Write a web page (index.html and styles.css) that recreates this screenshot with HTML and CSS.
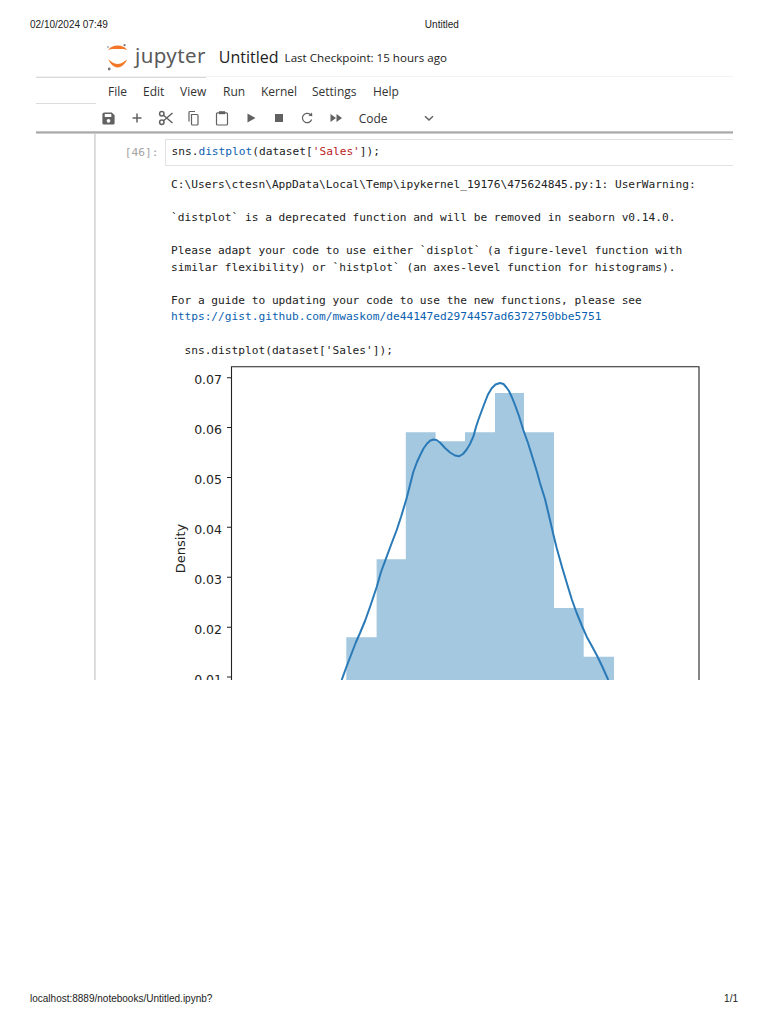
FILE: index.html
```html
<!DOCTYPE html>
<html lang="en">
<head>
<meta charset="utf-8">
<title>Untitled</title>
<link rel="stylesheet" href="styles.css">
</head>
<body>
<div class="sheet">
  <div class="print-head"><span>02/10/2024 07:49</span><span class="print-title">Untitled</span></div>
  <header class="nb-head">
    <svg class="logo" viewBox="107 44 21 27" width="21" height="27" aria-hidden="true">
      <path class="logo-arc" d="M108 50.400C110 47 113.600 45.600 117.700 45.600C121.800 45.600 125.400 47 127.200 50.400C125 48.400 121.600 49 117.700 49C113.800 49 110.200 48.400 108 50.400Z"/>
      <path class="logo-arc" d="M108.400 59.300C110.200 61 113.800 64 117.700 64C121.600 64 125 61 127 59.300C125.400 63.800 121.800 67.400 117.700 67.400C113.600 67.400 110 63.800 108.400 59.300Z"/>
      <circle class="logo-dot" cx="124.600" cy="45.200" r="1.100"/>
      <circle class="logo-dot" cx="108" cy="47" r=".8"/>
      <circle class="logo-dot" cx="109.200" cy="69" r="1.400"/>
    </svg>
    <span class="wordmark">jupyter</span>
    <span class="nb-title">Untitled</span>
    <span class="checkpoint">Last Checkpoint: 15 hours ago</span>
  </header>
  <section class="panel">
    <nav class="menu">
      <span>File</span><span>Edit</span><span>View</span><span>Run</span><span>Kernel</span><span>Settings</span><span>Help</span>
    </nav>
    <div class="toolbar">
      <span class="tool"><svg viewBox="0 0 16 16" width="15" height="15"><path class="fill" d="M3.500 1.500H11.500l3 3v8.500A1.500 1.500 0 0 1 13 14.500H3A1.500 1.500 0 0 1 1.500 13V3.500A2 2 0 0 1 3.500 1.500ZM4 3.300v3h7v-3ZM8 8.500a2 2 0 1 0 0 4 2 2 0 0 0 0-4Z" fill-rule="evenodd"/></svg></span>
      <span class="tool"><svg viewBox="0 0 16 16" width="16" height="16"><path class="line" d="M8 3.500v9M3.500 8h9"/></svg></span>
      <span class="tool"><svg viewBox="0 0 16 16" width="16" height="16"><circle class="line" cx="3.800" cy="3.800" r="2.200"/><circle class="line" cx="3.800" cy="12.200" r="2.200"/><path class="line" d="M5.500 5.300 14.500 13M5.500 10.700 14.500 3"/></svg></span>
      <span class="tool"><svg viewBox="0 0 16 16" width="16" height="16"><path class="thin" d="M5.500 4.500h5.500a1 1 0 0 1 1 1V14a1 1 0 0 1-1 1H6.500a1 1 0 0 1-1-1ZM3 11.500V2.500a1 1 0 0 1 1-1h5"/></svg></span>
      <span class="tool"><svg viewBox="0 0 16 16" width="16" height="16"><path class="thin" d="M5 2.800H3.500a1 1 0 0 0-1 1V14a1 1 0 0 0 1 1h9a1 1 0 0 0 1-1V3.800a1 1 0 0 0-1-1H11"/><path class="fill" d="M5 1.200h6v3H5Z"/></svg></span>
      <span class="tool"><svg viewBox="0 0 16 16" width="16" height="16"><path class="fill" d="M4.500 3.500 12.500 8l-8 4.500Z"/></svg></span>
      <span class="tool"><svg viewBox="0 0 16 16" width="16" height="16"><path class="fill" d="M4 4h8v8H4Z"/></svg></span>
      <span class="tool"><svg viewBox="0 0 16 16" width="16" height="16"><path class="thin" d="M12.600 9.500A4.700 4.700 0 1 1 11.300 4.500"/><path class="fill" d="M9.500 5.800 13.300 6.200 13 2.500Z"/></svg></span>
      <span class="tool"><svg viewBox="0 0 16 16" width="16" height="16"><path class="fill" d="M2.500 4 8 8l-5.500 4ZM8.500 4 14 8l-5.500 4Z"/></svg></span>
      <span class="cell-type">Code</span>
      <svg class="chevron" viewBox="0 0 12 12" width="12" height="12"><path class="line" d="M2 4.300 6 8l4-3.700"/></svg>
    </div>
  </section>
  <main class="notebook">
    <div class="cell">
      <div class="prompt">[46]:</div>
      <div class="input">sns.<span class="fn">distplot</span>(dataset[<span class="str">'Sales'</span>]);</div>
    </div>
    <pre class="output">C:\Users\ctesn\AppData\Local\Temp\ipykernel_19176\475624845.py:1: UserWarning:

`distplot` is a deprecated function and will be removed in seaborn v0.14.0.

Please adapt your code to use either `displot` (a figure-level function with
similar flexibility) or `histplot` (an axes-level function for histograms).

For a guide to updating your code to use the new functions, please see
<span class="link">https://gist.github.com/mwaskom/de44147ed2974457ad6372750bbe5751</span>

  sns.distplot(dataset['Sales']);</pre>
    <svg class="chart" viewBox="160 360 580 320" width="580" height="320" role="img" aria-label="Density histogram of Sales">
      <path class="bars" d="M346.300 690V637.300H376.600V559.300H405.800V432.300H435.600V441.300H465V432.300H495V393H524V432.300H554V608H583.700V656.700H614V690Z"/>
      <polyline class="kde" points="341.700,680 346,668 351,655 356,642 360,633 365,621 370,607 376.700,587 381,572 386.700,556.700 391,545 396.700,530 401,517 406.700,498 410,485 413.300,472 417,462 420,455.500 423.500,448.500 426.700,444 430,440.800 433.300,439.500 436.500,440 440,442.500 445,448 450,452.500 455,455.500 459,456.300 463,454 466.700,449.500 470,444 473.300,436.700 476,427 478.300,420 482,410 485,402 488,394.500 491.700,388.300 495.500,384.500 500,383 503.500,384 506.500,387.500 509,391 512,397.500 515,405 519,416 523.300,430 528,443 533.300,460 537,472 540,483 545,499 550,520 553,533 556.700,548 562,567 568.300,588 572,600 576.700,613 582,626 586.700,636.700 591,644.500 596.700,655 602,666 608.300,680"/>
      <path class="axis" d="M231.500 690V366.800H699V690"/>
      <path class="axis" d="M227 377.700h4M227 427.500h4M227 477.500h4M227 527.200h4M227 577.200h4M227 627.200h4M227 677h4"/>
      <g class="ticks">
        <text x="222" y="384">0.07</text>
        <text x="222" y="434">0.06</text>
        <text x="222" y="484">0.05</text>
        <text x="222" y="533.700">0.04</text>
        <text x="222" y="583.700">0.03</text>
        <text x="222" y="633.700">0.02</text>
        <text x="222" y="683.500">0.01</text>
      </g>
      <text class="ylabel" transform="translate(185 548.500) rotate(-90)">Density</text>
    </svg>
  </main>
</div>
<footer class="print-foot"><span>localhost:8889/notebooks/Untitled.ipynb?</span><span>1/1</span></footer>
</body>
</html>
```
FILE: styles.css
```css
* { box-sizing: border-box; }
html, body { margin: 0; padding: 0; background: #fff; }
body {
  width: 768px;
  height: 1024px;
  display: flex;
  flex-direction: column;
  justify-content: space-between;
  font-family: "Liberation Sans", Arial, sans-serif;
  overflow: hidden;
}
.sheet { height: 680px; overflow: hidden; }

.print-head {
  display: flex;
  height: 44px;
  padding: 19px 0 0 30px;
  font-size: 10px;
  line-height: 12px;
  color: #222;
}
.print-title { margin-left: 317px; }

.nb-head {
  display: flex;
  align-items: center;
  height: 32px;
  padding-left: 107px;
  font-family: "Open Sans", "Noto Sans", sans-serif;
  color: #222;
}
.logo { flex: none; margin-top: -5px; }
.logo-arc { fill: #f37726; }
.logo-dot { fill: #767677; }
.wordmark {
  margin-left: 7px;
  margin-top: -10px;
  font-family: "Noto Sans", sans-serif;
  font-size: 20.500px;
  letter-spacing: .4px;
  color: #5a5a5a;
}
.nb-title { margin-left: 13px; margin-top: -7px; font-size: 16px; }
.checkpoint { margin-left: 6px; margin-top: -6px; font-size: 11.600px; }

.panel {
  margin: 0 35px 0 36px;
  height: 58px;
  border-top: 1px solid #f2f2f2;
  background:
    linear-gradient(#d9d9d9, #d9d9d9) 0 0 / 170px 1px no-repeat,
    linear-gradient(#dcdcdc, #dcdcdc) 0 26px / 60px 1px no-repeat,
    linear-gradient(#d2d2d2, #a9a9a9 50%, #e2e2e2) 0 100% / 100% 3px no-repeat,
    #fff;
  font-family: "Open Sans", "Noto Sans", sans-serif;
  color: #333;
}
.menu {
  display: flex;
  align-items: center;
  height: 27px;
  padding: 2px 0 0 72px;
  font-size: 12px;
}
.menu span:nth-child(1) { width: 35px; }
.menu span:nth-child(2) { width: 37px; }
.menu span:nth-child(3) { width: 43px; }
.menu span:nth-child(4) { width: 38px; }
.menu span:nth-child(5) { width: 51px; }
.menu span:nth-child(6) { width: 61px; }

.toolbar {
  display: flex;
  align-items: center;
  height: 28px;
  padding-left: 58.800px;
}
.tool { display: flex; justify-content: center; width: 28.330px; flex: none; }
.fill { fill: #616161; }
.line { fill: none; stroke: #616161; stroke-width: 1.500; }
.thin { fill: none; stroke: #616161; stroke-width: 1.200; }
.cell-type { margin-left: 9px; width: 64.500px; font-size: 12px; }
.chevron { flex: none; }

.notebook {
  margin-right: 35px;
  padding-top: 5px;
  background: linear-gradient(90deg, #fff 94px, #d4d4d4 94px, #e4e4e4 96px, #fff 96px);
  height: 546px;
}
.cell { display: flex; height: 27px; }
.prompt {
  width: 165px;
  padding-right: 6.500px;
  text-align: right;
  font: 11.180px/27px "DejaVu Sans Mono", monospace;
  color: #a3a3a3;
}
.input {
  flex: 1;
  padding-left: 5.500px;
  border: 1px solid #e2e2e2;
  border-right: 0;
  font: 11.180px/24px "DejaVu Sans Mono", monospace;
  color: #222;
  background: #fff;
}
.fn { color: #0b5fb0; }
.str { color: #ba2121; }
.output {
  margin: 10.700px 0 0 171px;
  font: 11.180px/16.600px "DejaVu Sans Mono", monospace;
  color: #222;
}
.link { color: #0b5fb0; }
.chart { display: block; margin: .7px 0 0 160px; overflow: hidden; }
.bars { fill: #a5c8e1; }
.kde { fill: none; stroke: #2a7ab7; stroke-width: 2; stroke-linejoin: round; }
.axis { fill: none; stroke: #222; stroke-width: 1.100; }
.ticks text { font: 12.500px "DejaVu Sans", sans-serif; text-anchor: end; fill: #222; }
.ylabel { font: 13px "DejaVu Sans", sans-serif; text-anchor: middle; fill: #222; }

.print-foot {
  display: flex;
  justify-content: space-between;
  padding: 0 30px 19px;
  font-size: 10px;
  line-height: 12px;
  color: #222;
}
```
